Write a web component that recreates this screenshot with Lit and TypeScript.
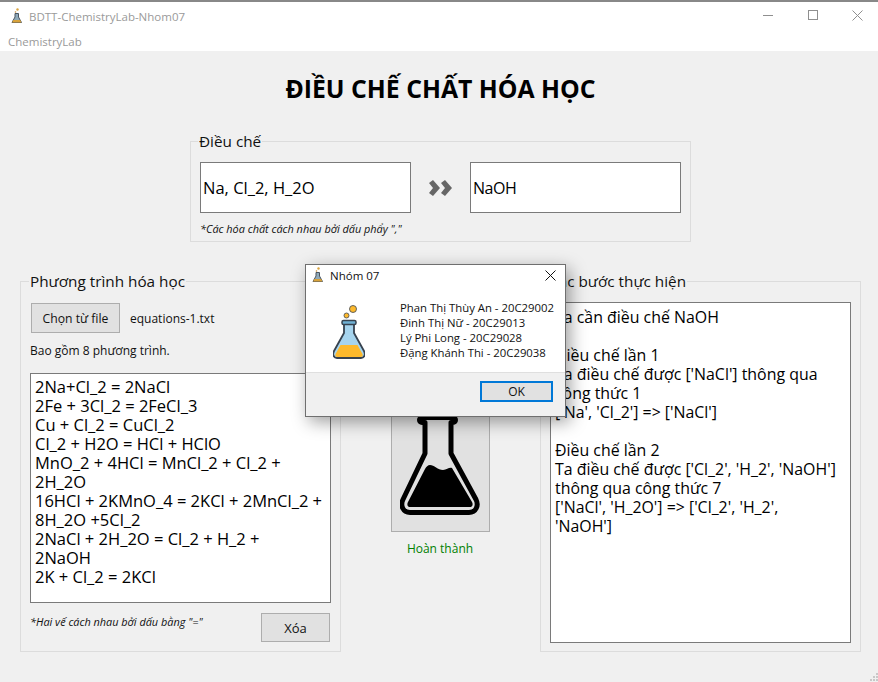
import { LitElement, html, css, svg } from "lit";
import { customElement } from "lit/decorators.js";

const smallFlask = svg`
  <circle cx="7.500" cy="1.500" r="1.200" fill="#d9a441"/>
  <circle cx="5.500" cy="4" r=".8" fill="#c98f3a"/>
  <path d="M5 5.500h3.500v3.500l3 5.500H2l3-5.500z" fill="#8fa9b8" stroke="#4a5560" stroke-width="1"/>
  <path d="M3.300 12h6.900l1.200 2.500H2.100z" fill="#d8a23a"/>`;

const leftLines = [
  "2Na+Cl_2 = 2NaCl",
  "2Fe + 3Cl_2 = 2FeCl_3",
  "Cu + Cl_2 = CuCl_2",
  "Cl_2 + H2O = HCl + HClO",
  "MnO_2 + 4HCl = MnCl_2 + Cl_2 +",
  "2H_2O",
  "16HCl + 2KMnO_4 = 2KCl + 2MnCl_2 +",
  "8H_2O +5Cl_2",
  "2NaCl + 2H_2O = Cl_2 + H_2 +",
  "2NaOH",
  "2K + Cl_2 = 2KCl",
];

const rightLines = [
  "Ta cần điều chế NaOH",
  "",
  "Điều chế lần 1",
  "Ta điều chế được ['NaCl'] thông qua",
  "công thức 1",
  "['Na', 'Cl_2'] => ['NaCl']",
  "",
  "Điều chế lần 2",
  "Ta điều chế được ['Cl_2', 'H_2', 'NaOH']",
  "thông qua công thức 7",
  "['NaCl', 'H_2O'] => ['Cl_2', 'H_2',",
  "'NaOH']",
];

@customElement("app-root")
export class AppRoot extends LitElement {
  static styles = css`
    :host {
      display: block;
      width: 878px;
      height: 682px;
      overflow: hidden;
      font-family: "Open Sans", "Noto Sans", sans-serif;
      color: #111;
    }
    * { box-sizing: border-box; }
    .window {
      position: relative;
      display: flex;
      flex-direction: column;
      height: 682px;
      border-top: 2px solid #888;
      background: #f0f0f0;
    }
    .titlebar {
      height: 28px;
      background: #fff;
      display: flex;
      align-items: center;
      padding-left: 10px;
      font-size: 11.5px;
      color: #9a9a9a;
      flex: none;
    }
    .titlebar .app-icon { width: 14px; height: 17px; margin-right: 5px; }
    .titlebar .name { flex: 1; }
    .ctrl {
      display: block;
      stroke: #8f8f8f;
      fill: none;
      flex: none;
    }
    .controls {
      display: flex;
      align-items: center;
      gap: 34px;
      padding-right: 15px;
      margin-bottom: 2px;
    }
    .menu {
      height: 21px;
      background: #fff;
      font-size: 11.5px;
      color: #9a9a9a;
      padding-left: 8px;
      line-height: 23px;
      flex: none;
    }
    .content {
      flex: 1;
      display: flex;
      flex-direction: column;
      padding: 0 17px 0 20px;
    }
    h1 {
      margin: 19px 0 0;
      height: 36px;
      line-height: 36px;
      text-align: center;
      font-size: 24.8px;
      font-weight: 700;
      color: #000;
      flex: none;
    }
    fieldset {
      margin: 0;
      min-width: 0;
      border: 1px solid #dcdcdc;
      padding: 0;
    }
    legend {
      font-size: 15.3px;
      line-height: 20px;
      padding: 0 1px;
      margin-left: -2px;
      color: #111;
    }
    .equations legend { margin-left: -1px; }
    .make {
      width: 501px;
      height: 111px;
      margin: 25px 0 0 170px;
      padding: 11px 9px 0;
      flex: none;
    }
    .make-row {
      display: flex;
      align-items: center;
    }
    .field {
      width: 211px;
      height: 51px;
      background: #fff;
      border: 1px solid #7a7a7a;
      font-size: 16.5px;
      display: flex;
      align-items: center;
      padding-left: 2px;
      color: #000;
      flex: none;
    }
    .field.short { font-size: 16px; letter-spacing: -0.5px; }
    .arrows {
      width: 59px;
      display: flex;
      justify-content: center;
      flex: none;
    }
    .hint {
      font-size: 10.9px;
      font-style: italic;
      color: #111;
    }
    .make .hint { margin-top: 9px; line-height: 14px; }
    .panels {
      display: grid;
      grid-template-columns: 321px 1fr 321px;
      margin-top: 29px;
      height: 381px;
      flex: none;
    }
    .panel { height: 381px; padding: 0; }
    .equations { padding: 12px 9px 0 9px; }
    .file-row {
      display: flex;
      align-items: center;
      gap: 10px;
      font-size: 12px;
      margin-left: 1px;
    }
    .btn {
      background: #e1e1e1;
      border: 1px solid #adadad;
      font-size: 12.2px;
      font-family: inherit;
      color: #111;
      padding: 0;
      display: flex;
      align-items: center;
      justify-content: center;
    }
    .file-btn { width: 89px; height: 30px; }
    .count { font-size: 12px; line-height: 16px; margin-top: 10px; }
    .text {
      background: #fff;
      border: 1px solid #7a7a7a;
      color: #000;
      white-space: pre;
      overflow: hidden;
    }
    .equations .text {
      width: 301px;
      height: 230px;
      margin-top: 14px;
      padding: 3px 0 0 4px;
      font-size: 16.5px;
      line-height: 19px;
    }
    .foot {
      display: flex;
      justify-content: space-between;
      align-items: flex-start;
      margin-top: 10px;
    }
    .foot .hint { line-height: 14px; margin-top: 2px; }
    .clear-btn { width: 69px; height: 29px; font-size: 13px; margin-right: 1px; }
    .center {
      display: flex;
      flex-direction: column;
      align-items: center;
      justify-content: flex-end;
      padding-bottom: 95px;
      padding-right: 1px;
    }
    .flask-btn {
      width: 99px;
      height: 142px;
      background: #e1e1e1;
      border: 1px solid #adadad;
      display: flex;
      align-items: flex-end;
      justify-content: center;
      padding-bottom: 16px;
    }
    .flask-btn svg { display: block; }
    .done {
      font-size: 12px;
      color: #008000;
      line-height: 16px;
      margin-top: 9px;
    }
    .steps { padding: 11px 0 0 9px; }
    .steps .text {
      width: 301px;
      height: 341px;
      padding: 5px 0 0 4px;
      font-size: 15.9px;
      line-height: 19px;
    }
    .grip {
      position: absolute;
      right: 0;
      bottom: 1px;
      width: 8px;
      height: 8px;
    }
    .dialog {
      position: absolute;
      left: 305px;
      top: 262px;
      width: 261px;
      height: 153px;
      background: #f0f0f0;
      border: 1px solid #6f6f6f;
      box-shadow: 4px 5px 16px rgba(0, 0, 0, 0.38);
      display: flex;
      flex-direction: column;
    }
    .dlg-title {
      height: 24px;
      background: #fff;
      display: flex;
      align-items: center;
      padding: 0 9px 4px 5px;
      font-size: 11.5px;
      color: #111;
      flex: none;
    }
    .dlg-title svg.app-icon { width: 14px; height: 17px; margin-right: 5px; }
    .dlg-title span { flex: 1; }
    .dlg-body {
      height: 84px;
      background: #fff;
      border-bottom: 1px solid #dfdfdf;
      display: flex;
      flex: none;
    }
    .dlg-icon { margin: 14px 0 0 27px; width: 32px; height: 56px; flex: none; }
    .dlg-lines {
      margin: 11px 0 0 35px;
      font-size: 11.35px;
      line-height: 15px;
      white-space: pre;
      color: #111;
    }
    .dlg-foot {
      flex: 1;
      display: flex;
      justify-content: flex-end;
      align-items: flex-start;
      padding: 8px 12px 0 0;
    }
    .ok {
      width: 73px;
      height: 21px;
      background: #e1e1e1;
      border: 2px solid #0078d7;
      font-size: 12px;
      font-family: inherit;
      color: #111;
      padding: 0;
    }
  `;

  render() {
    return html`
      <div class="window">
        <div class="titlebar">
          <svg class="app-icon" viewBox="0 0 14 17">${smallFlask}</svg>
          <span class="name">BDTT-ChemistryLab-Nhom07</span>
          <div class="controls">
            <svg class="ctrl" width="11" height="11"><path d="M0 5.500h10"/></svg>
            <svg class="ctrl" width="10" height="10"><rect x=".5" y=".5" width="9" height="9"/></svg>
            <svg class="ctrl" width="11" height="11"><path d="M.5.5l10 10M10.500.5l-10 10"/></svg>
          </div>
        </div>
        <div class="menu">ChemistryLab</div>
        <div class="content">
          <h1>ĐIỀU CHẾ CHẤT HÓA HỌC</h1>
          <fieldset class="make">
            <legend>Điều chế</legend>
            <div class="make-row">
              <div class="field">Na, Cl_2, H_2O</div>
              <div class="arrows">
                <svg width="26" height="16" viewBox="0 0 26 16">
                  <path d="M1 3l4-3 7 8-7 8-4-3 4-5zM13 3l4-3 7 8-7 8-4-3 4-5z" fill="#666"/>
                </svg>
              </div>
              <div class="field short">NaOH</div>
            </div>
            <div class="hint">*Các hóa chất cách nhau bởi dấu phẩy ","</div>
          </fieldset>
          <div class="panels">
            <fieldset class="panel equations">
              <legend>Phương trình hóa học</legend>
              <div class="file-row">
                <button class="btn file-btn">Chọn từ file</button>
                <span>equations-1.txt</span>
              </div>
              <div class="count">Bao gồm 8 phương trình.</div>
              <div class="text">${leftLines.join("\n")}</div>
              <div class="foot">
                <div class="hint">*Hai vế cách nhau bởi dấu bằng "="</div>
                <button class="btn clear-btn">Xóa</button>
              </div>
            </fieldset>
            <div class="center">
              <div class="flask-btn">
                <svg width="80" height="100" viewBox="0 0 80 100">
                  <path d="M22 2.500h31a2.500 2.500 0 0 1 0 5h-2v31l25 46c3 6 0 13-7 13H10c-7 0-10-7-7-13l22-46V7.500h-3a2.500 2.500 0 0 1 0-5z" fill="none" stroke="#000" stroke-width="5" stroke-linejoin="round"/>
                  <path d="M30 50c4 0 8 5 13 5 4 0 6-3 9-2l20 34c1.500 3 0 5-2 5H10c-2 0-3.500-2-2-5l17-33c1-2 3-4 5-4z" fill="#000"/>
                </svg>
              </div>
              <div class="done">Hoàn thành</div>
            </div>
            <fieldset class="panel steps">
              <legend>Các bước thực hiện</legend>
              <div class="text">${rightLines.join("\n")}</div>
            </fieldset>
          </div>
        </div>
        <svg class="grip" viewBox="0 0 8 8" fill="#c8c8c8">
          <rect x="6" y="0" width="2" height="2"/><rect x="3" y="3" width="2" height="2"/><rect x="6" y="3" width="2" height="2"/>
          <rect x="0" y="6" width="2" height="2"/><rect x="3" y="6" width="2" height="2"/><rect x="6" y="6" width="2" height="2"/>
        </svg>
        <div class="dialog">
          <div class="dlg-title">
            <svg class="app-icon" viewBox="0 0 14 17">${smallFlask}</svg>
            <span>Nhóm 07</span>
            <svg width="11" height="11" stroke="#111" fill="none"><path d="M.5.5l10 10M10.500.5l-10 10"/></svg>
          </div>
          <div class="dlg-body">
            <svg class="dlg-icon" viewBox="0 0 32 56">
              <circle cx="20" cy="6" r="3.500" fill="#fdb92c" stroke="#3c4654" stroke-width=".8"/>
              <circle cx="13.500" cy="12.500" r="2.500" fill="#fdb92c" stroke="#3c4654" stroke-width=".8"/>
              <path d="M11 20h10v10l10 18c2 4 0 7-3 7H4c-3 0-5-3-3-7l10-18z" fill="#a6d4ee" stroke="#37424f" stroke-width="1.800" stroke-linejoin="round"/>
              <path d="M7.500 42h17l5 9c.7 2 0 3-2 3H4.500c-2 0-2.700-1-2-3z" fill="#fdb92c"/>
              <rect x="9" y="17.500" width="14" height="4" rx="1.500" fill="#6fb0d3" stroke="#37424f" stroke-width="1.500"/>
            </svg>
            <div class="dlg-lines">Phan Thị Thùy An - 20C29002
Đinh Thị Nữ - 20C29013
Lý Phi Long - 20C29028
Đặng Khánh Thi - 20C29038</div>
          </div>
          <div class="dlg-foot"><button class="ok">OK</button></div>
        </div>
      </div>
    `;
  }
}
